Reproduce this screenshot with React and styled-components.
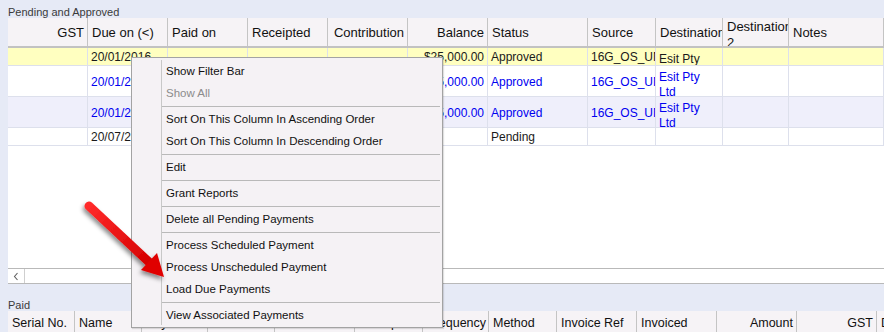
import styled, { createGlobalStyle } from "styled-components";

const GlobalStyle = createGlobalStyle`
  html, body {
    margin: 0;
    padding: 0;
    background: #e6eaf6;
    font-family: "Liberation Sans", Arial, sans-serif;
    overflow: hidden;
  }
`;

const Page = styled.div`
  position: relative;
  width: 884px;
  height: 332px;
  padding-left: 8px;
  box-sizing: border-box;
  overflow: hidden;
  background: #e6eaf6;
`;

const SectionLabel = styled.div`
  height: ${(p) => p.$h}px;
  padding-top: ${(p) => p.$pad}px;
  box-sizing: border-box;
  overflow: hidden;
  font-size: 11px;
  line-height: 13px;
  color: #3a3a3a;
`;

const Grid = styled.div`
  display: flex;
  flex-direction: column;
  height: 266px;
  background: #fff;
`;

const HeaderRow = styled.div`
  display: flex;
  height: ${(p) => p.$h}px;
  box-sizing: border-box;
  background: #f6f3f6;
  border-bottom: ${(p) => (p.$thick ? "2px solid #c2c2c2" : "none")};
  flex-shrink: 0;
`;

const HeaderCell = styled.div`
  display: flex;
  align-items: ${(p) => (p.$wrap ? "flex-start" : "center")};
  justify-content: ${(p) => (p.$align === "right" ? "flex-end" : "flex-start")};
  text-align: ${(p) => p.$align || "left"};
  width: ${(p) => (p.$w ? `${p.$w}px` : "auto")};
  flex: ${(p) => (p.$w ? "0 0 auto" : "1 1 auto")};
  box-sizing: border-box;
  padding: ${(p) => (p.$wrap ? "1px 3px 0 4px" : "2px 3px 0 4px")};
  border-right: 1px solid #c4c4c4;
  overflow: hidden;
  font-size: ${(p) => p.$size}px;
  line-height: 16px;
  color: #111;
  white-space: ${(p) => (p.$wrap ? "normal" : "nowrap")};
`;

const Row = styled.div`
  display: flex;
  height: ${(p) => p.$h}px;
  box-sizing: border-box;
  background: ${(p) => p.$bg};
  border-bottom: 1px solid #dde0ec;
  color: ${(p) => p.$color};
  flex-shrink: 0;
`;

const Cell = styled.div`
  display: flex;
  align-items: ${(p) => (p.$wrap ? "flex-start" : "center")};
  justify-content: ${(p) => (p.$align === "right" ? "flex-end" : "flex-start")};
  width: ${(p) => (p.$w ? `${p.$w}px` : "auto")};
  flex: ${(p) => (p.$w ? "0 0 auto" : "1 1 auto")};
  box-sizing: border-box;
  padding: ${(p) => (p.$wrap ? "4px 5px 0 3px" : "2px 3px 0 3px")};
  border-right: 1px solid #dde0ec;
  overflow: hidden;
  font-size: 12px;
  line-height: 15px;
  white-space: ${(p) => (p.$wrap ? "normal" : "nowrap")};
`;

const Filler = styled.div`
  flex: 1;
  background: #fff;
`;

const ScrollBar = styled.div`
  display: flex;
  height: 16px;
  box-sizing: border-box;
  background: #fff;
  border-top: 1px solid #b9b9b9;
  border-bottom: 1px solid #b9b9b9;
`;

const ScrollButton = styled.div`
  width: 17px;
  display: flex;
  align-items: center;
  justify-content: center;
  border-right: 1px solid #cfcfcf;
  box-sizing: border-box;
`;

const Menu = styled.div`
  position: absolute;
  left: 131px;
  top: 57px;
  width: 312px;
  box-sizing: border-box;
  padding: 2px 2px 1px 30px;
  background: #f5f2f5;
  border: 1px solid #a3a3a3;
  box-shadow: 1px 1px 1px rgba(0, 0, 0, 0.12);
  display: flex;
  flex-direction: column;

  &::before {
    content: "";
    position: absolute;
    left: 29px;
    top: 2px;
    bottom: 2px;
    width: 1px;
    background: #c8c8c8;
  }
`;

const MenuItem = styled.div`
  height: 22px;
  display: flex;
  align-items: center;
  padding-left: 4px;
  font-size: 11.5px;
  color: ${(p) => (p.$disabled ? "#8c8c8c" : "#111")};
  white-space: nowrap;
`;

const Separator = styled.div`
  height: 1px;
  margin: 2px 0 1px;
  background: #b9b9b9;
`;

const ArrowOverlay = styled.svg`
  position: absolute;
  left: 78px;
  top: 193px;
  overflow: visible;
  pointer-events: none;
`;

const BLUE = "#0000f0";
const BLACK = "#1a1a1a";

const pendingCols = [
  { key: "gst", title: "GST", w: 80, align: "right" },
  { key: "due", title: "Due on (<)", w: 80 },
  { key: "paid", title: "Paid on", w: 80 },
  { key: "receipted", title: "Receipted", w: 80 },
  { key: "contribution", title: "Contribution", w: 80, align: "right" },
  { key: "balance", title: "Balance", w: 80, align: "right" },
  { key: "status", title: "Status", w: 100 },
  { key: "source", title: "Source", w: 68 },
  { key: "dest", title: "Destination", w: 67, wrap: true },
  { key: "dest2", title: "Destination 2", w: 66, wrap: true, headWrap: true },
  { key: "notes", title: "Notes" },
];

const approved = {
  due: "20/01/2016",
  balance: "$25,000.00",
  status: "Approved",
  source: "16G_OS_UNSW",
  dest: "Esit Pty Ltd",
};

const rows = [
  { id: 1, h: 18, bg: "#ffffc0", color: BLACK, ...approved },
  { id: 2, h: 31, bg: "#ffffff", color: BLUE, ...approved },
  { id: 3, h: 31, bg: "#efeffb", color: BLUE, ...approved },
  { id: 4, h: 18, bg: "#ffffff", color: BLACK, due: "20/07/2016", status: "Pending" },
];

const paidCols = [
  { title: "Serial No.", w: 67 },
  { title: "Name", w: 67 },
  { title: "Payee", w: 66 },
  { title: "Due on", w: 67 },
  { title: "Paid on", w: 80 },
  { title: "Receipted", w: 68 },
  { title: "Frequency", w: 66 },
  { title: "Method", w: 68 },
  { title: "Invoice Ref", w: 80 },
  { title: "Invoiced", w: 80 },
  { title: "Amount", w: 80, align: "right" },
  { title: "GST", w: 80, align: "right" },
  { title: "Description" },
];

const menuItems = [
  { label: "Show Filter Bar" },
  { label: "Show All", disabled: true },
  { sep: true },
  { label: "Sort On This Column In Ascending Order" },
  { label: "Sort On This Column In Descending Order" },
  { sep: true },
  { label: "Edit" },
  { sep: true },
  { label: "Grant Reports" },
  { sep: true },
  { label: "Delete all Pending Payments" },
  { sep: true },
  { label: "Process Scheduled Payment" },
  { label: "Process Unscheduled Payment" },
  { label: "Load Due Payments" },
  { sep: true },
  { label: "View Associated Payments" },
];

const RedArrow = () => (
  <ArrowOverlay width="100" height="95" viewBox="0 0 100 95">
    <defs>
      <linearGradient id="arrowFill" x1="0" y1="0" x2="1" y2="1">
        <stop offset="0" stopColor="#ff2a2a" />
        <stop offset="1" stopColor="#d40000" />
      </linearGradient>
      <filter id="arrowShadow" x="-30%" y="-30%" width="160%" height="160%">
        <feDropShadow dx="-1.5" dy="3" stdDeviation="2" floodColor="#000" floodOpacity="0.45" />
      </filter>
    </defs>
    <g filter="url(#arrowShadow)">
      <line
        x1="11"
        y1="13"
        x2="72"
        y2="70"
        stroke="url(#arrowFill)"
        strokeWidth="9"
        strokeLinecap="round"
      />
      <polygon points="86,84 63,77 79,60" fill="#e00000" />
    </g>
  </ArrowOverlay>
);

export default function App() {
  return (
    <Page>
      <GlobalStyle />
      <SectionLabel $h={18} $pad={6}>
        Pending and Approved
      </SectionLabel>
      <Grid>
        <HeaderRow $h={30} $thick>
          {pendingCols.map((c) => (
            <HeaderCell key={c.key} $w={c.w} $align={c.align} $wrap={c.headWrap} $size={13}>
              {c.title}
            </HeaderCell>
          ))}
        </HeaderRow>
        {rows.map((r) => (
          <Row key={r.id} $h={r.h} $bg={r.bg} $color={r.color}>
            {pendingCols.map((c) => (
              <Cell key={c.key} $w={c.w} $align={c.align} $wrap={c.wrap}>
                {r[c.key] || ""}
              </Cell>
            ))}
          </Row>
        ))}
        <Filler />
        <ScrollBar>
          <ScrollButton>
            <svg width="6" height="9" viewBox="0 0 6 9">
              <polyline points="4.5,1 1.5,4.5 4.5,8" fill="none" stroke="#606060" strokeWidth="1.1" />
            </svg>
          </ScrollButton>
        </ScrollBar>
      </Grid>
      <SectionLabel $h={27} $pad={15}>
        Paid
      </SectionLabel>
      <HeaderRow $h={21}>
        {paidCols.map((c) => (
          <HeaderCell key={c.title} $w={c.w} $align={c.align} $size={12.5}>
            {c.title}
          </HeaderCell>
        ))}
      </HeaderRow>

      <Menu>
        {menuItems.map((m, i) =>
          m.sep ? (
            <Separator key={`s${i}`} />
          ) : (
            <MenuItem key={m.label} $disabled={m.disabled}>
              {m.label}
            </MenuItem>
          )
        )}
      </Menu>
      <RedArrow />
    </Page>
  );
}
